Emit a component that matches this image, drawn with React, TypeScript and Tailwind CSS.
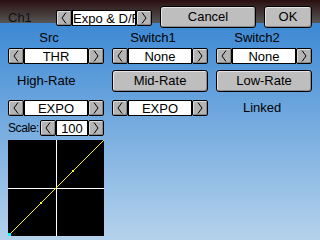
import clsx from 'clsx'

const font = { fontFamily: '"Liberation Sans", Arial, sans-serif' }

function Chevron({ dir }: { dir: 'left' | 'right' }) {
  return (
    <svg width="6" height="12" viewBox="0 0 6 12" className="block">
      <polyline
        points={dir === 'left' ? '5,0.5 1,6 5,11.5' : '1,0.5 5,6 1,11.5'}
        fill="none"
        stroke="#000"
        strokeWidth="1"
      />
    </svg>
  )
}

function ArrowBtn({ dir }: { dir: 'left' | 'right' }) {
  return (
    <div className="flex h-4 w-4 shrink-0 items-center justify-center rounded-[2px] border border-black bg-[#b4b4b4] shadow-[inset_1px_1px_0_#dcdcdc,inset_-1px_-1px_0_#8a8a8a]">
      <Chevron dir={dir} />
    </div>
  )
}

function Spinner({ value, boxW = 'w-16', left = false }: { value: string; boxW?: string; left?: boolean }) {
  return (
    <div className="flex h-4">
      <ArrowBtn dir="left" />
      <div
        className={clsx(
          'flex h-4 items-center overflow-hidden whitespace-nowrap border border-black bg-white text-[13px] leading-none text-black',
          boxW,
          left ? 'justify-start' : 'justify-center'
        )}
      >
        {value}
      </div>
      <ArrowBtn dir="right" />
    </div>
  )
}

function Btn({ children, className }: { children: React.ReactNode; className?: string }) {
  return (
    <div
      className={clsx(
        'flex h-[22px] items-center justify-center rounded-[3px] border border-black bg-[#bebebe] text-[13px] text-black shadow-[inset_1px_1px_0_#e4e4e4,inset_-1px_-1px_0_#8c8c8c]',
        className
      )}
    >
      {children}
    </div>
  )
}

// expo curve at 0% -> straight diagonal, drawn pixel by pixel
const diag = Array.from({ length: 96 }, (_, i) => i)

function Curve() {
  return (
    <svg width="96" height="96" viewBox="0 0 96 96" className="block" shapeRendering="crispEdges">
      <rect x="0" y="0" width="96" height="96" fill="#000" />
      <rect x="48" y="0" width="1" height="96" fill="#fff" />
      <rect x="0" y="48" width="96" height="1" fill="#fff" />
      {diag.map((i) => (
        <rect key={i} x={i} y={95 - i} width="1" height="1" fill={i % 2 ? '#e6e600' : '#ffff00'} />
      ))}
      <rect x="32" y="62" width="2" height="2" fill="#ffff00" />
      <rect x="64" y="30" width="2" height="2" fill="#ffff00" />
      <rect x="0" y="93" width="3" height="3" fill="#00ffff" />
    </svg>
  )
}

export default function App() {
  return (
    <div
      className="flex h-[240px] w-[320px] flex-col overflow-hidden bg-[linear-gradient(to_bottom,#2a0f0f_0px,#565656_23px,#3d89d4_23px,#b5d2ec_240px)] px-2 text-black"
      style={font}
    >
      {/* Title bar */}
      <div className="flex h-[31px] shrink-0 items-start">
        <div className="mt-[10px] h-4 w-12 text-[13px] leading-4 text-[#111]">Ch1</div>
        <div className="mt-[10px]">
          <Spinner value="Expo & D/R" left />
        </div>
        <Btn className="ml-2 mt-[6px] w-24">Cancel</Btn>
        <Btn className="ml-2 mt-[6px] w-12">OK</Btn>
      </div>

      {/* Source / switches */}
      <div className="grid h-[13px] grid-cols-3 gap-x-2 text-[13px] leading-[13px]">
        <div className="pr-[14px] text-center">Src</div>
        <div className="pr-[14px] text-center">Switch1</div>
        <div className="pr-[14px] text-center">Switch2</div>
      </div>
      <div className="mt-1 grid grid-cols-3 gap-x-2">
        <Spinner value="THR" />
        <Spinner value="None" />
        <Spinner value="None" />
      </div>

      {/* Rates */}
      <div className="mt-[6px] grid grid-cols-3 gap-x-2">
        <div className="flex h-[22px] items-center pl-[9px] text-[13px]">High-Rate</div>
        <Btn>Mid-Rate</Btn>
        <Btn>Low-Rate</Btn>
      </div>

      <div className="mt-2 grid grid-cols-3 gap-x-2">
        <Spinner value="EXPO" />
        <Spinner value="EXPO" />
        <div className="flex h-4 items-center pl-[27px] text-[13px]">Linked</div>
      </div>

      {/* Scale + graph */}
      <div className="mt-1 flex h-4 items-center">
        <div className="w-8 text-[12px] leading-4 tracking-[-0.4px]">Scale:</div>
        <Spinner value="100" boxW="w-8" />
      </div>
      <div className="mt-1">
        <Curve />
      </div>
    </div>
  )
}
